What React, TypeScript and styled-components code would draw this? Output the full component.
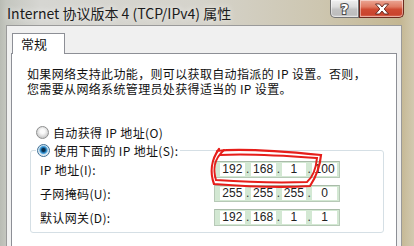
import React from "react";
import styled, { createGlobalStyle } from "styled-components";

const GlobalStyle = createGlobalStyle`
  html, body {
    margin: 0;
    padding: 0;
    background: #c9c2ab;
  }
`;

const Window = styled.div`
  position: relative;
  width: 414px;
  height: 246px;
  overflow: hidden;
  display: flex;
  flex-direction: column;
  background: linear-gradient(90deg, #b9bcb4 0px, #c4c6bf 6px, #d6d6d2 40px, #d5d3cb 200px, #cdc6b0 320px, #c4b792 400px, #d2c9b0 414px);
  font-family: "Noto Sans CJK SC", "Noto Sans", sans-serif;
`;

const TitleBar = styled.div`
  height: 25px;
  display: flex;
  align-items: flex-start;
  flex-shrink: 0;
`;

const Title = styled.div`
  padding-left: 7px;
  line-height: 26px;
  font-size: 14px;
  color: #1b1b1b;
  text-shadow: 0 0 6px rgba(255, 255, 255, 0.9);
  white-space: nowrap;
`;

const CaptionButtons = styled.div`
  margin-left: auto;
  margin-right: 10px;
  display: flex;
`;

const CaptionButton = styled.div<{ $close?: boolean }>`
  width: ${(p) => (p.$close ? 45 : 29)}px;
  height: 18px;
  box-sizing: border-box;
  display: flex;
  align-items: center;
  justify-content: center;
  border: 1px solid ${(p) => (p.$close ? "#6d2a1f" : "#727272")};
  border-top: none;
  border-radius: ${(p) => (p.$close ? "0 0 5px 0" : "0 0 0 5px")};
  background: ${(p) =>
    p.$close
      ? "linear-gradient(180deg, #eba796 0%, #e07a62 40%, #cf4b33 55%, #c9442e 85%, #e0735c 100%)"
      : "linear-gradient(180deg, #f0f0f0 0%, #dcdcdc 40%, #c3c3c3 55%, #bdbdbd 85%, #d3d3d3 100%)"};
  box-shadow: inset 0 0 0 1px rgba(255, 255, 255, 0.45);
`;

const HelpGlyph = styled.span`
  font-family: "DejaVu Sans", sans-serif;
  font-weight: 700;
  font-size: 14px;
  line-height: 1;
  color: #ffffff;
  -webkit-text-stroke: 2px #4a4a4a;
  paint-order: stroke fill;
`;

const Body = styled.div`
  flex: 1;
  margin: 0 12px 0 6px;
  padding: 7px 4px 0 4px;
  background: #f0f0f0;
  border: 1px solid #9a9a9a;
  border-bottom: none;
  display: flex;
  flex-direction: column;
`;

const TabStrip = styled.div`
  display: flex;
  padding-left: 1px;
`;

const Tab = styled.div`
  position: relative;
  z-index: 1;
  width: 53px;
  height: 21px;
  box-sizing: border-box;
  margin-bottom: -1px;
  padding-left: 8px;
  background: #ffffff;
  border: 1px solid #8d8f96;
  border-bottom: none;
  font-size: 13px;
  line-height: 20px;
  color: #111;
`;

const TabPanel = styled.div`
  flex: 1;
  background: #ffffff;
  border: 1px solid #8d8f96;
  border-bottom: none;
  padding: 12px 12px 0 15px;
  font-size: 12px;
  letter-spacing: 0.35px;
  color: #111;
`;

const Intro = styled.p`
  margin: 0;
  line-height: 15px;
  white-space: nowrap;
`;

const RadioRow = styled.label`
  display: flex;
  align-items: center;
  height: 16px;
  gap: 4px;
  white-space: nowrap;
`;

const TopRadio = styled(RadioRow)`
  margin: 28px 0 0 9px;
`;

const RadioDot = styled.span<{ $checked?: boolean }>`
  width: 13px;
  height: 13px;
  box-sizing: border-box;
  border-radius: 50%;
  flex-shrink: 0;
  border: 1px solid ${(p) => (p.$checked ? "#3d6f96" : "#8e8f8f")};
  background: ${(p) =>
    p.$checked
      ? "radial-gradient(circle at 50% 45%, #0c2f4a 0 1.5px, #1d6ea8 2.5px, #4fa7e0 3.6px, #cfe3f0 4.6px, #eef2f4 6px)"
      : "radial-gradient(circle at 50% 40%, #fbfbfb 0 2px, #e6e6e6 4px, #cdcdcd 6px)"};
`;

const Group = styled.fieldset`
  margin: 2px 0 0 3px;
  padding: 3px 8px 6px 9px;
  border: 1px solid #d5dfe5;
  border-radius: 3px;
  min-width: 0;
`;

const Legend = styled.legend`
  margin-left: -4px;
  padding: 0 2px 0 1px;
`;

const FieldGrid = styled.div`
  display: grid;
  grid-template-columns: 174px 126px;
  row-gap: 7px;
  align-items: center;
`;

const FieldLabel = styled.span`
  white-space: nowrap;
  line-height: 17px;
`;

const IpBox = styled.div`
  height: 17px;
  box-sizing: border-box;
  display: flex;
  align-items: stretch;
  padding: 1px 2px 1px 5px;
  background: #d3e8d3;
  border: 1px solid #b7c9b7;
  border-top-color: #a9bba9;
  letter-spacing: 0;
`;

const Octet = styled.span`
  flex: 1;
  background: #ffffff;
  text-align: center;
  font-family: "Liberation Sans", Arial, sans-serif;
  font-size: 12px;
  line-height: 13px;
  color: #222;
`;

const Dot = styled.span`
  width: 6px;
  text-align: center;
  font-family: "Liberation Sans", Arial, sans-serif;
  font-size: 12px;
  line-height: 13px;
  color: #333;
`;

const Scribble = styled.svg`
  position: absolute;
  left: 0;
  top: 0;
  pointer-events: none;
`;

const IpField = ({ value }: { value: string }) => {
  const parts = value.split(".");
  return (
    <IpBox>
      {parts.map((part, i) => (
        <React.Fragment key={i}>
          {i > 0 && <Dot>.</Dot>}
          <Octet>{part}</Octet>
        </React.Fragment>
      ))}
    </IpBox>
  );
};

const rows = [
  { label: "IP 地址(I):", value: "192.168.1.100" },
  { label: "子网掩码(U):", value: "255.255.255.0" },
  { label: "默认网关(D):", value: "192.168.1.1" },
];

const App = () => {
  return (
    <>
      <GlobalStyle />
      <Window>
        <TitleBar>
          <Title>Internet 协议版本 4 (TCP/IPv4) 属性</Title>
          <CaptionButtons>
            <CaptionButton>
              <HelpGlyph>?</HelpGlyph>
            </CaptionButton>
            <CaptionButton $close>
              <svg width="16" height="12" viewBox="0 0 16 12">
                <path
                  d="M1.5 1 H5.5 L8 4 L10.5 1 H14.5 L10.2 6 L14.5 11 H10.5 L8 8 L5.5 11 H1.5 L5.8 6 Z"
                  fill="#ffffff"
                  stroke="#5a2018"
                  strokeWidth="0.9"
                  strokeLinejoin="round"
                />
              </svg>
            </CaptionButton>
          </CaptionButtons>
        </TitleBar>
        <Body>
          <TabStrip>
            <Tab>常规</Tab>
          </TabStrip>
          <TabPanel>
            <Intro>
              如果网络支持此功能，则可以获取自动指派的 IP 设置。否则，
              <br />
              您需要从网络系统管理员处获得适当的 IP 设置。
            </Intro>
            <TopRadio>
              <RadioDot />
              自动获得 IP 地址(O)
            </TopRadio>
            <Group>
              <Legend>
                <RadioRow>
                  <RadioDot $checked />
                  使用下面的 IP 地址(S):
                </RadioRow>
              </Legend>
              <FieldGrid>
                {rows.map((r) => (
                  <React.Fragment key={r.label}>
                    <FieldLabel>{r.label}</FieldLabel>
                    <IpField value={r.value} />
                  </React.Fragment>
                ))}
              </FieldGrid>
            </Group>
          </TabPanel>
        </Body>
        <Scribble width="414" height="246" viewBox="0 0 414 246">
          <path
            d="M217 151 C240 148, 290 152, 321 155 C320 166, 316 177, 310 186 C280 188, 240 186, 214 184 C210 173, 211 160, 219 149"
            fill="none"
            stroke="#e61e1a"
            strokeWidth="2.2"
            strokeLinecap="round"
          />
          <path
            d="M220 155 C250 153, 290 156, 317 158 C316 168, 313 177, 307 182 C280 183, 245 182, 216 180 C213 170, 213 160, 224 150"
            fill="none"
            stroke="#e61e1a"
            strokeWidth="2"
            strokeLinecap="round"
          />
        </Scribble>
      </Window>
    </>
  );
};

export default App;
